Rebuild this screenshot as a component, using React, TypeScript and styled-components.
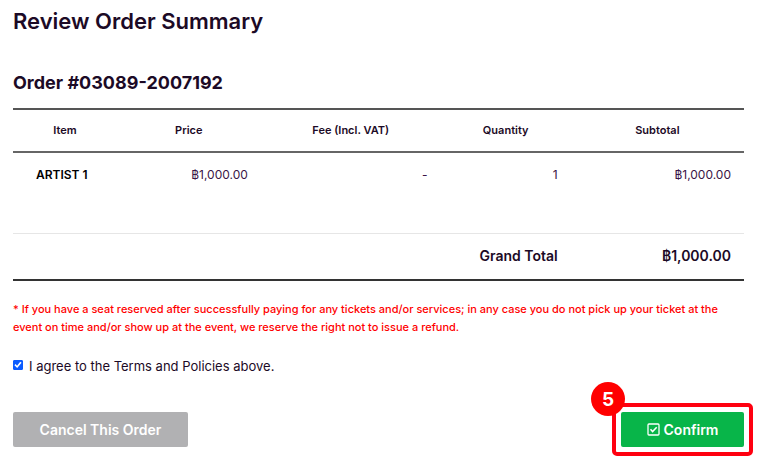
import React from "react";
import styled, { createGlobalStyle } from "styled-components";

const GlobalStyle = createGlobalStyle`
  * { box-sizing: border-box; }
  body {
    margin: 0;
    background: #ffffff;
    color: #1c0a26;
    font-family: Inter, "Noto Sans", sans-serif;
    font-size: 12px;
  }
`;

const Page = styled.main`
  padding: 5px 15px 12px 13px;
`;

const Title = styled.h1`
  margin: 0;
  font-size: 22px;
  line-height: 32px;
  font-weight: 600;
`;

const OrderNumber = styled.h2`
  margin: 33px 0 12px;
  font-size: 18px;
  line-height: 26px;
  font-weight: 700;
`;

const Table = styled.table`
  width: 100%;
  table-layout: fixed;
  border-collapse: collapse;
  border-top: 2px solid #555555;
  border-bottom: 2px solid #333333;
`;

const Column = styled.col<{ $share: string }>`
  width: ${(p) => p.$share};
`;

const HeadCell = styled.th`
  height: 43px;
  padding: 0 0 2px;
  border-bottom: 2px solid #666666;
  font-size: 11px;
  font-weight: 600;
  line-height: 16px;
  text-align: center;
`;

const Cell = styled.td`
  height: 81px;
  padding: 14px 13px;
  font-size: 12px;
  line-height: 16px;
  text-align: right;
  vertical-align: top;
  color: #3a1446;
`;

const ItemName = styled.th`
  padding: 14px 0 14px 23px;
  font-size: 12px;
  font-weight: 600;
  line-height: 16px;
  text-align: left;
  vertical-align: top;
  color: #000000;
`;

const TotalRow = styled.tr`
  border-top: 1px solid #e6e6e6;
`;

const TotalCell = styled.td`
  height: 47px;
  padding: 0 13px;
  font-size: 14px;
  font-weight: 600;
  line-height: 20px;
  text-align: right;
`;

const Notice = styled.p`
  margin: 19px 0 0;
  font-size: 11px;
  line-height: 18px;
  font-weight: 500;
  color: #ff0000;
`;

const Agreement = styled.label`
  display: flex;
  align-items: center;
  gap: 6px;
  margin-top: 20px;
  font-size: 13px;
  line-height: 20px;
  font-weight: 400;
`;

const Checkbox = styled.input`
  appearance: none;
  flex: none;
  display: grid;
  place-items: center;
  width: 10px;
  height: 10px;
  margin: 0 0 2px;
  border: 1px solid #0b5cff;
  border-radius: 1px;
  background: #ffffff;

  &:checked {
    background: #0b5cff;
  }

  &:checked::before {
    content: "";
    width: 8px;
    height: 8px;
    background: #ffffff;
    clip-path: polygon(5% 52%, 20% 38%, 38% 58%, 78% 8%, 95% 22%, 40% 88%);
  }
`;

const Actions = styled.div`
  display: flex;
  justify-content: space-between;
  margin-top: 36px;
`;

const Button = styled.button<{ $primary?: boolean }>`
  display: flex;
  align-items: center;
  justify-content: center;
  gap: 4px;
  height: 35px;
  width: ${(p) => (p.$primary ? "123px" : "175px")};
  padding: 0;
  border: 0;
  border-radius: 2px;
  background: ${(p) => (p.$primary ? "#08b549" : "#b1b1b3")};
  color: #ffffff;
  font-family: inherit;
  font-size: 14px;
  font-weight: 600;
`;

const Highlight = styled.div`
  position: relative;

  &::after {
    content: "";
    position: absolute;
    inset: -9px;
    border: 4px solid #ff0010;
    border-radius: 5px;
    pointer-events: none;
  }
`;

const StepBadge = styled.span`
  position: absolute;
  z-index: 1;
  top: -30px;
  left: -30px;
  display: flex;
  align-items: center;
  justify-content: center;
  width: 34px;
  height: 34px;
  border-radius: 50%;
  background: #ff0000;
  color: #ffffff;
  font-size: 19px;
  font-weight: 700;
`;

const CheckIcon = () => (
  <svg width="13" height="13" viewBox="0 0 13 13" fill="none" stroke="#ffffff" aria-hidden="true">
    <rect x="1" y="1" width="11" height="11" rx="1" strokeWidth="1.3" />
    <path d="M3.5 6.2 5.6 8.6 9.7 4.2" strokeWidth="1.5" />
  </svg>
);

const shares = ["14.2%", "19.7%", "24.6%", "17.8%", "23.7%"];
const headings = ["Item", "Price", "Fee (Incl. VAT)", "Quantity", "Subtotal"];
const items = [
  { name: "ARTIST 1", values: ["฿1,000.00", "-", "1", "฿1,000.00"] },
];

export default function App() {
  return (
    <>
      <GlobalStyle />
      <Page>
        <Title>Review Order Summary</Title>
        <OrderNumber>Order #03089-2007192</OrderNumber>
        <Table>
          <colgroup>
            {shares.map((share, i) => (
              <Column key={i} $share={share} />
            ))}
          </colgroup>
          <thead>
            <tr>
              {headings.map((h) => (
                <HeadCell key={h} scope="col">{h}</HeadCell>
              ))}
            </tr>
          </thead>
          <tbody>
            {items.map((item) => (
              <tr key={item.name}>
                <ItemName scope="row">{item.name}</ItemName>
                {item.values.map((v, i) => (
                  <Cell key={i}>{v}</Cell>
                ))}
              </tr>
            ))}
          </tbody>
          <tfoot>
            <TotalRow>
              <TotalCell colSpan={4}>Grand Total</TotalCell>
              <TotalCell>฿1,000.00</TotalCell>
            </TotalRow>
          </tfoot>
        </Table>
        <Notice>
          * If you have a seat reserved after successfully paying for any tickets and/or services; in any case you do not pick up your ticket at the event on time and/or show up at the event, we reserve the right not to issue a refund.
        </Notice>
        <Agreement htmlFor="agree">
          <Checkbox id="agree" type="checkbox" defaultChecked />
          I agree to the Terms and Policies above.
        </Agreement>
        <Actions>
          <Button type="button">Cancel This Order</Button>
          <Highlight>
            <StepBadge>5</StepBadge>
            <Button type="button" $primary>
              <CheckIcon />
              Confirm
            </Button>
          </Highlight>
        </Actions>
      </Page>
    </>
  );
}
